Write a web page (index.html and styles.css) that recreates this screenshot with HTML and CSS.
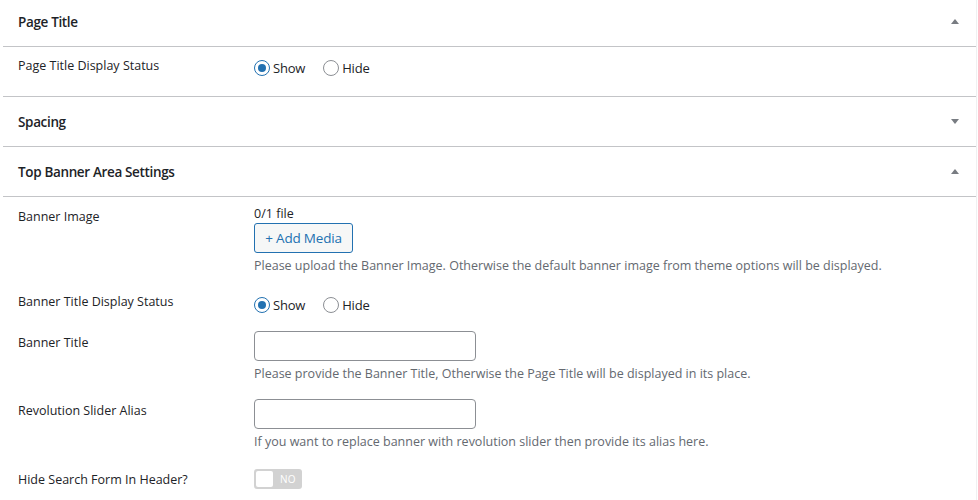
FILE: index.html
```html
<!DOCTYPE html>
<html>
<head>
<meta charset="utf-8">
<link rel="stylesheet" href="styles.css">
</head>
<body>
<div class="panel">
  <section class="box">
    <div class="box-head first">
      <h2>Page Title</h2>
      <span class="arrow up"></span>
    </div>
    <div class="box-body single">
      <div class="row">
        <div class="label lbl-radio">Page Title Display Status</div>
        <div class="control">
          <div class="radios">
            <label class="radio"><span class="dot checked"></span>Show</label>
            <label class="radio"><span class="dot"></span>Hide</label>
          </div>
        </div>
      </div>
    </div>
  </section>
  <section class="box">
    <div class="box-head">
      <h2>Spacing</h2>
      <span class="arrow down"></span>
    </div>
  </section>
  <section class="box">
    <div class="box-head">
      <h2>Top Banner Area Settings</h2>
      <span class="arrow up"></span>
    </div>
    <div class="box-body banner">
      <div class="row">
        <div class="label lbl-media">Banner Image</div>
        <div class="control">
          <div class="count">0/1 file</div>
          <button class="btn">+ Add Media</button>
          <p class="desc">Please upload the Banner Image. Otherwise the default banner image from theme options will be displayed.</p>
        </div>
      </div>
      <div class="row gap-radio">
        <div class="label lbl-radio2">Banner Title Display Status</div>
        <div class="control">
          <div class="radios">
            <label class="radio"><span class="dot checked"></span>Show</label>
            <label class="radio"><span class="dot"></span>Hide</label>
          </div>
        </div>
      </div>
      <div class="row gap-input">
        <div class="label lbl-input">Banner Title</div>
        <div class="control">
          <div class="input"></div>
          <p class="desc tight">Please provide the Banner Title, Otherwise the Page Title will be displayed in its place.</p>
        </div>
      </div>
      <div class="row gap-input">
        <div class="label lbl-input">Revolution Slider Alias</div>
        <div class="control">
          <div class="input"></div>
          <p class="desc tight">If you want to replace banner with revolution slider then provide its alias here.</p>
        </div>
      </div>
      <div class="row gap-toggle">
        <div class="label lbl-toggle">Hide Search Form In Header?</div>
        <div class="control">
          <div class="toggle"><span class="knob"></span><span class="toggle-text">NO</span></div>
        </div>
      </div>
    </div>
  </section>
</div>
</body>
</html>
```

FILE: styles.css
```css
* { box-sizing: border-box; }
html, body { margin: 0; padding: 0; background: #fff; }
body {
  font-family: "Open Sans", "Noto Sans", "Liberation Sans", sans-serif;
  font-size: 13px;
  color: #1d2327;
  overflow: hidden;
}
.panel {
  margin: -3px 0 0 3px;
  width: 974px;
  border-right: 1px solid #f0f0f1;
  background: #fff;
}
.box-head {
  height: 50px;
  border-bottom: 1px solid #c3c4c7;
  display: flex;
  align-items: center;
  justify-content: space-between;
  padding: 0 17px 0 15px;
}
.box-head h2 {
  margin: 0;
  font-size: 13.5px;
  font-weight: 600;
  letter-spacing: -0.35px;
  color: #1d2327;
}
.arrow {
  width: 0; height: 0;
  border-left: 4px solid transparent;
  border-right: 4px solid transparent;
}
.arrow.up { border-bottom: 5px solid #787c82; }
.arrow.down { border-top: 5px solid #787c82; }
.box-body { border-bottom: 1px solid #c3c4c7; }
.box-body.single { height: 50px; padding-top: 12px; }
.box-body.banner { border-bottom: 0; padding-top: 9px; padding-bottom: 20px; }
.row { display: flex; align-items: flex-start; }
.label {
  width: 251px;
  flex: none;
  padding-left: 15px;
  line-height: 16px;
  font-size: 12.5px;
  letter-spacing: 0;
  color: #1d2327;
}
.lbl-radio { margin-top: -1px; }
.lbl-media { padding-top: 3px; }
.lbl-radio2 { margin-top: -2px; }
.lbl-input { padding-top: 4px; }
.lbl-toggle { padding-top: 3px; }
.gap-radio { margin-top: 22px; }
.gap-input { margin-top: 17px; }
.gap-toggle { margin-top: 19px; }
.control { flex: 1; }
.radios { display: flex; gap: 18px; height: 18px; align-items: center; }
.radio { display: flex; align-items: center; gap: 3px; font-size: 13px; letter-spacing: -0.2px; color: #1d2327; }
.dot {
  width: 16px; height: 16px; border-radius: 50%;
  border: 1px solid #8c8f94; background: #fff;
  display: inline-flex; align-items: center; justify-content: center;
}
.dot.checked { border-color: #2271b1; }
.dot.checked::after {
  content: ""; width: 8px; height: 8px; border-radius: 50%; background: #2271b1;
}
.count { line-height: 16px; font-size: 12.5px; }
.btn {
  display: block;
  margin-top: 1px;
  height: 30px;
  width: 99px;
  padding: 0;
  border: 1px solid #2271b1;
  border-radius: 3px;
  background: #f6f7f7;
  color: #2271b1;
  font-family: inherit;
  font-size: 13.5px;
  letter-spacing: -0.2px;
}
.desc {
  margin: 4px 0 0;
  line-height: 17px;
  color: #646970;
  font-size: 12.5px;
  letter-spacing: 0;
}
.desc.tight { margin-top: 4px; }
.input {
  width: 222px; height: 30px;
  border: 1px solid #8c8f94;
  border-radius: 4px;
  background: #fff;
}
.toggle {
  width: 48px; height: 20px;
  border-radius: 3px;
  background: #d2d2d2;
  display: flex; align-items: center;
  padding-left: 2px;
}
.knob {
  width: 17px; height: 16px; background: #fff; border-radius: 2px;
}
.toggle-text {
  color: #fff; font-size: 10px; margin-left: 7px; letter-spacing: 0.2px;
}
```
